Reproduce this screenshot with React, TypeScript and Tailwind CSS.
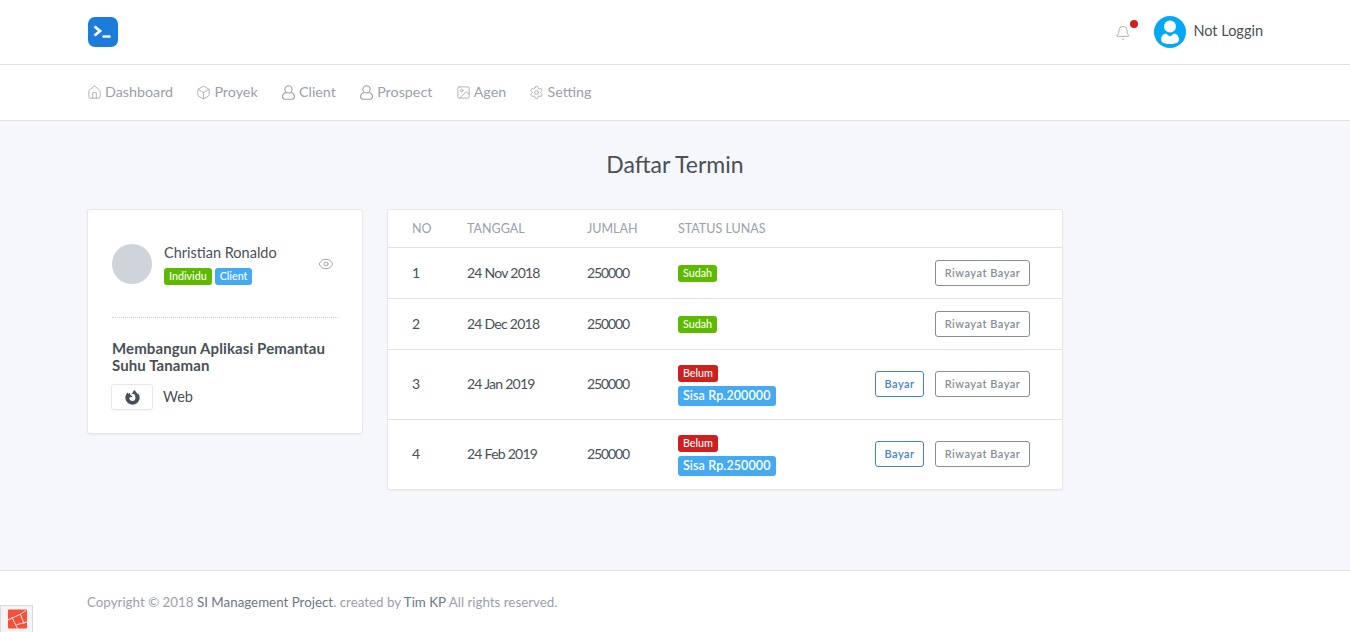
import { Bell, Box, Eye, House, Image, Settings } from "lucide-react";
import { FaFirefoxBrowser } from "react-icons/fa";

function Person({ className }: { className?: string }) {
  return (
    <svg viewBox="0 0 14 15" fill="none" stroke="currentColor" strokeWidth="1.1" className={className} aria-hidden>
      <circle cx="7" cy="4.4" r="3.6" />
      <path d="M4.3 7.4 C2.2 8.2 1 9.800 1 11.600 C1 13.300 2 14.200 3.500 14.200 H10.500 C12 14.200 13 13.300 13 11.600 C13 9.800 11.800 8.200 9.700 7.400" />
    </svg>
  );
}

const NAV = [
  { label: "Dashboard", icon: House },
  { label: "Proyek", icon: Box },
  { label: "Client", icon: Person },
  { label: "Prospect", icon: Person },
  { label: "Agen", icon: Image },
  { label: "Setting", icon: Settings },
];

const ROWS = [
  { no: 1, date: "24 Nov 2018", paid: true },
  { no: 2, date: "24 Dec 2018", paid: true },
  { no: 3, date: "24 Jan 2019", paid: false, sisa: "Sisa Rp.200000" },
  { no: 4, date: "24 Feb 2019", paid: false, sisa: "Sisa Rp.250000" },
];

const TAG = "inline-flex h-[17px] items-center rounded-[3px] px-[5px] text-[10.7px] font-medium text-white";
const BTN = "inline-flex h-[26px] items-center justify-center rounded-[3px] border bg-white text-[11px] font-semibold tracking-[0.5px]";

function Logo() {
  return (
    <svg viewBox="0 0 30 30" className="h-[30px] w-[30px]" aria-hidden>
      <rect width="30" height="30" rx="7" fill="#1b7cdb" />
      <path d="M6.500 9.500 L12 14 L6.500 18.500" fill="none" stroke="#fff" strokeWidth="2.800" />
      <path d="M14.500 19.500 H22.500" fill="none" stroke="#fff" strokeWidth="2.400" />
    </svg>
  );
}

function Avatar() {
  return (
    <svg viewBox="0 0 32 32" className="h-8 w-8" aria-hidden>
      <circle cx="16" cy="16" r="16" fill="#03a9f4" />
      <circle cx="16" cy="10.500" r="6" fill="#fff" />
      <path d="M12 17.500 C8.500 18 7 21 7 23.500 C7 26.500 10 28 16 28 C22 28 25 26.500 25 23.500 C25 21 23.500 18 20 17.500 L16 20.500 Z" fill="#fff" />
    </svg>
  );
}

function DebugIcon() {
  return (
    <svg viewBox="0 0 20 20" className="h-5 w-[19px]" aria-hidden>
      <rect width="20" height="20" rx="1" fill="#f4503a" />
      <path d="M0 11 L13 5 L19 1 M4 8 L10 20 M13 5 L17 15 M9 16 L20 13" fill="none" stroke="#fff" strokeWidth="0.9" />
    </svg>
  );
}

export default function App() {
  return (
    <div className="flex h-[632px] flex-col overflow-hidden bg-[#f5f7fb] font-['Lato',sans-serif] text-[15px] text-[#495057]">
      <header className="flex h-[65px] shrink-0 items-center justify-between border-b border-[#dee3eb] bg-white pl-[88px] pr-[87px]">
        <Logo />
        <div className="flex items-center">
          <span className="relative mr-[23px] mt-[1px] text-[#9aa0ac]">
            <Bell className="h-[16px] w-[16px]" strokeWidth={1.25} />
            <span className="absolute -right-[7px] -top-[5px] h-2 w-2 rounded-full bg-[#cd201f]" />
          </span>
          <Avatar />
          <span className="mb-[3px] ml-[7px] text-[14.5px] text-[#495057]">Not Loggin</span>
        </div>
      </header>

      <nav className="flex h-[56px] shrink-0 items-center gap-[23.3px] border-b border-[#dee3eb] bg-white pb-[2px] pl-[87px] text-[14.3px] text-[#9aa0ac]">
        {NAV.map(({ label, icon: Icon }) => (
          <a key={label} className="flex items-center gap-[3px]">
            <Icon className="mt-[2px] h-[15px] w-[15px]" strokeWidth={1.25} />
            {label}
          </a>
        ))}
      </nav>

      <main className="flex-1 pl-[87px]">
        <h1 className="mr-[87px] mt-[28px] text-center text-[23px] leading-[30px] text-[#495057]">Daftar Termin</h1>

        <div className="mt-[30px] flex items-start gap-[24px]">
          <section className="h-[225px] w-[276px] rounded-[3px] border border-[#e6e8ee] bg-white px-6 pt-[24px] shadow-[0_1px_2px_rgba(0,0,0,0.05)]">
            <div className="flex h-[60px] items-center">
              <div className="h-10 w-10 rounded-full bg-[#ced4da]" />
              <div className="ml-3 flex-1">
                <p className="text-[14.5px] leading-[18px]">Christian Ronaldo</p>
                <div className="mt-[6px] flex gap-[3px]">
                  <span className={`${TAG} bg-[#5eba00]`}>Individu</span>
                  <span className={`${TAG} bg-[#45aaf2]`}>Client</span>
                </div>
              </div>
              <Eye className="mr-[4px] h-4 w-4 text-[#9aa0ac]" strokeWidth={1.4} />
            </div>
            <div className="mt-[23px] border-t border-dotted border-[#ced4da]" />
            <h2 className="mt-[22px] text-[15px] font-bold leading-[17px] tracking-[0.1px]">Membangun Aplikasi Pemantau Suhu Tanaman</h2>
            <div className="mt-[10px] flex items-center">
              <span className="-ml-px flex h-[26px] w-[42px] items-center justify-center rounded-[3px] border border-[#e6e8ee] bg-white shadow-[0_1px_1px_rgba(0,0,0,0.04)]">
                <FaFirefoxBrowser className="h-[15px] w-[15px] text-[#495057]" />
              </span>
              <span className="ml-[10px] text-[14.5px]">Web</span>
            </div>
          </section>

          <section className="w-[676px] overflow-hidden rounded-[3px] border border-[#e6e8ee] bg-white shadow-[0_1px_2px_rgba(0,0,0,0.05)]">
            <div className="grid h-[38px] grid-cols-[55px_120px_91px_1fr] items-center border-b border-[#dee3eb] pl-6 pt-[2px] text-[12.5px] text-[#9aa0ac]">
              <span>NO</span>
              <span>TANGGAL</span>
              <span>JUMLAH</span>
              <span>STATUS LUNAS</span>
            </div>
            {ROWS.map((row) => (
              <div
                key={row.no}
                className={`grid grid-cols-[55px_120px_91px_1fr] items-center pl-6 text-[14px] ${row.paid ? "h-[51px] border-b border-[#dee3eb]" : row.no === 3 ? "h-[70px] border-b border-[#dee3eb]" : "h-[69px]"}`}
              >
                <span className="pb-[2px]">{row.no}</span>
                <span className="pb-[2px] tracking-[-0.75px]">{row.date}</span>
                <span className="pb-[2px] tracking-[-1.1px]">250000</span>
                <div className="flex items-center justify-between pr-[32px]">
                  <div className={`flex flex-col items-start gap-[4px] ${row.paid ? "" : "pt-[2px]"}`}>
                    {row.paid ? (
                      <span className={`${TAG} bg-[#5eba00]`}>Sudah</span>
                    ) : (
                      <>
                        <span className={`${TAG} bg-[#cd201f]`}>Belum</span>
                        <span className="inline-flex h-5 w-[98px] items-center rounded-[3px] bg-[#45aaf2] px-[5px] text-[12.5px] font-semibold tracking-[0.1px] text-white">
                          {row.sisa}
                        </span>
                      </>
                    )}
                  </div>
                  <div className={`flex gap-[11px] ${row.paid ? "" : "pb-[1px]"}`}>
                    {!row.paid && <button className={`${BTN} w-[49px] border-[#467fcf] text-[#467fcf]`}>Bayar</button>}
                    <button className={`${BTN} w-[95px] border-[#868e96] text-[#868e96]`}>Riwayat Bayar</button>
                  </div>
                </div>
              </div>
            ))}
          </section>
        </div>
      </main>

      <footer className="relative flex h-[62px] shrink-0 items-center border-t border-[#dee3eb] bg-white pl-[87px] pt-[2px] text-[13.35px] text-[#9aa0ac]">
        <p>
          Copyright © 2018 <span className="text-[#6e7687]">SI Management Project</span>. created by{" "}
          <span className="text-[#6e7687]">Tim KP</span> All rights reserved.
        </p>
        <div className="absolute bottom-0 left-0 flex h-[27px] w-[33px] items-start justify-center border border-b-0 border-[#dcdcdc] bg-[#f4f4f4] pl-px pt-[3px]">
          <DebugIcon />
        </div>
      </footer>
    </div>
  );
}
